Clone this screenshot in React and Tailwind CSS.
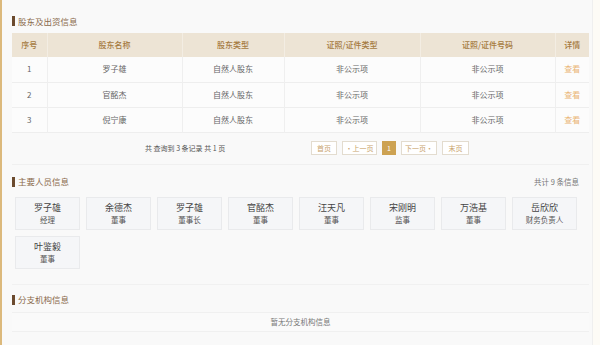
import React from "react";

const font = { fontFamily: '"Noto Sans CJK SC", "Noto Sans", sans-serif' };

function Title({ children }) {
  return (
    <div className="flex items-center h-[12px] gap-[3px]">
      <div className="w-[3px] h-[10px] bg-[#6b4a2e]" />
      <span className="text-[8.5px] leading-none text-[#8a6a4c]">{children}</span>
    </div>
  );
}

const rows = [
  ["1", "罗子雄"],
  ["2", "官酩杰"],
  ["3", "倪宁康"],
];

const people = [
  ["罗子雄", "经理"],
  ["余德杰", "董事"],
  ["罗子雄", "董事长"],
  ["官酩杰", "董事"],
  ["汪天凡", "董事"],
  ["宋刚明", "监事"],
  ["万浩基", "董事"],
  ["岳欣欣", "财务负责人"],
  ["叶鉴毅", "董事"],
];

export default function App() {
  return (
    <div style={font} className="w-[600px] h-[345px] overflow-hidden flex bg-[#fdfbf6]">
      <div className="w-[2px] h-full bg-[#dcb97c]" />
      <div className="w-[591px] h-full bg-[#f9f9f9] border-r border-[#efefef] pl-[10px] pr-[3px]">
        {/* Section 1 */}
        <div className="pt-[15px]">
          <Title>股东及出资信息</Title>
          <table className="mt-[6px] w-[577px] table-fixed border-collapse text-[8px] leading-none">
            <colgroup>
              <col className="w-[35px]" />
              <col className="w-[135px]" />
              <col className="w-[102px]" />
              <col className="w-[136px]" />
              <col className="w-[135px]" />
              <col className="w-[34px]" />
            </colgroup>
            <thead>
              <tr className="h-[24px] bg-[#ede4d5] text-[#a57a3f]">
                <th className="font-medium border-r border-[#f3ede3]">序号</th>
                <th className="font-medium border-r border-[#f3ede3]">股东名称</th>
                <th className="font-medium border-r border-[#f3ede3]">股东类型</th>
                <th className="font-medium border-r border-[#f3ede3]">证照/证件类型</th>
                <th className="font-medium border-r border-[#f3ede3]">证照/证件号码</th>
                <th className="font-medium">详情</th>
              </tr>
            </thead>
            <tbody className="text-[#666]">
              {rows.map(([n, name], i) => (
                <tr key={i} className="h-[25px] bg-[#fcfcfc] border-b border-[#eeeeee]">
                  <td className="text-center border-r border-[#efefef]">{n}</td>
                  <td className="text-center border-r border-[#efefef]">{name}</td>
                  <td className="text-center border-r border-[#efefef]">自然人股东</td>
                  <td className="text-center border-r border-[#efefef]">非公示项</td>
                  <td className="text-center border-r border-[#efefef]">非公示项</td>
                  <td className="text-center text-[#eab676]">查看</td>
                </tr>
              ))}
            </tbody>
          </table>
          <div className="w-[577px] h-[32px] flex items-center border-b border-[#f0f0f0]">
            <div className="w-[299px] pl-[133px] text-[7px] text-[#555] whitespace-nowrap">共 查询到 3 条记录 共 1 页</div>
            <div className="flex items-center gap-[5px] text-[7px] text-[#c9a36c]">
              <span className="h-[14px] w-[26px] border border-[#e3dccf] bg-white flex items-center justify-center">首页</span>
              <span className="h-[14px] w-[35px] border border-[#e3dccf] bg-white flex items-center justify-center">•上一页</span>
              <span className="h-[14px] w-[14px] bg-[#cda252] text-white flex items-center justify-center">1</span>
              <span className="h-[14px] w-[36px] border border-[#e3dccf] bg-white flex items-center justify-center">下一页•</span>
              <span className="h-[14px] w-[27px] border border-[#e3dccf] bg-white flex items-center justify-center">末页</span>
            </div>
          </div>
        </div>

        {/* Section 2 */}
        <div className="pt-[11px] w-[577px]">
          <div className="flex items-center justify-between pr-[10px]">
            <Title>主要人员信息</Title>
            <span className="text-[7.5px] text-[#777]">共计 9 条信息</span>
          </div>
          <div className="mt-[9px] pl-[3px] grid grid-cols-[repeat(8,65px)] gap-x-[6px] gap-y-[6px]">
            {people.map(([n, r], i) => (
              <div key={i} className="h-[33px] bg-[#f5f6f8] border border-[#e9eaec] flex flex-col items-center justify-center gap-[4px]">
                <span className="text-[9px] leading-none text-[#444]">{n}</span>
                <span className="text-[7.5px] leading-none text-[#555]">{r}</span>
              </div>
            ))}
          </div>
          <div className="mt-[15px] border-b border-[#f1f1f1]" />
        </div>

        {/* Section 3 */}
        <div className="pt-[9px] w-[577px]">
          <Title>分支机构信息</Title>
          <div className="mt-[6px] h-[20px] border-y border-[#f0f0f0] bg-[#fafafa] flex items-center justify-center text-[7.5px] text-[#777]">
            暂无分支机构信息
          </div>
        </div>
      </div>
    </div>
  );
}
